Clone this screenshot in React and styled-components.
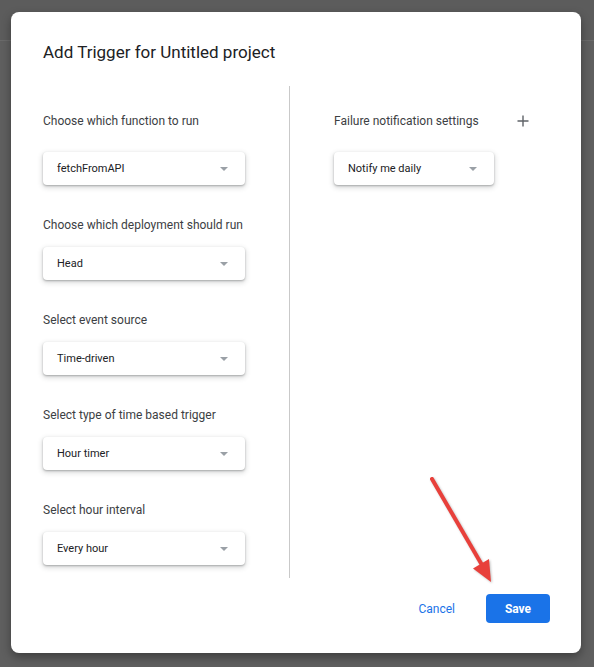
import React from 'react';
import styled, { createGlobalStyle } from 'styled-components';

const GlobalStyle = createGlobalStyle`
  html, body {
    margin: 0;
    padding: 0;
  }

  body {
    width: 594px;
    min-height: 667px;
    background: linear-gradient(
      to bottom,
      #5c5c5c 0,
      #5c5c5c 40px,
      #6a6a6a 40px,
      #6a6a6a 41px,
      #5f5f5f 41px
    );
    font-family: Roboto, "Liberation Sans", sans-serif;
  }
`

const Backdrop = styled.div`
  padding: 12px 13px 14px 11px;
`

const Dialog = styled.div`
  position: relative;
  background: #fff;
  border-radius: 8px;
  box-shadow: 0 4px 10px rgba(0, 0, 0, 0.35);
  padding: 28px 31px 30px 32px;
`

const Title = styled.h2`
  margin: 0;
  font-family: Roboto, "Liberation Sans", sans-serif;
  font-weight: 400;
  font-size: 17px;
  line-height: 24px;
  color: #202124;
`

const Columns = styled.div`
  display: grid;
  grid-template-columns: 247px 1fr;
  margin-top: 22px;
`

const Column = styled.div`
  display: flex;
  flex-direction: column;
  padding: 25px 0 13px ${props => props.$inset || 0}px;
  border-right: ${props => (props.$divider ? '1px solid #c9c9c9' : 'none')};
`

const Field = styled.div`
  display: flex;
  flex-direction: column;
  & + & {
    margin-top: 30px;
  }
`

const LabelRow = styled.div`
  display: flex;
  align-items: center;
  justify-content: space-between;
  width: ${props => (props.$width ? `${props.$width}px` : 'auto')};
  margin-bottom: ${props => props.$gap || 12}px;
`

const Label = styled.span`
  font-size: 12px;
  line-height: 20px;
  color: #3c4043;
`

const AddButton = styled.button`
  display: flex;
  padding: 0;
  border: none;
  background: none;
  cursor: pointer;
`

const Select = styled.div`
  display: flex;
  align-items: center;
  justify-content: space-between;
  box-sizing: border-box;
  width: ${props => props.$width}px;
  height: 33px;
  padding: 0 17px 0 14px;
  border-radius: 4px;
  background: #fff;
  box-shadow: 0 1px 2px rgba(60, 64, 67, 0.35), 0 2px 5px 1px rgba(60, 64, 67, 0.18);
  font-size: 11px;
  color: #202124;
  cursor: pointer;
`

const Caret = styled.span`
  width: 0;
  height: 0;
  border-left: 4px solid transparent;
  border-right: 4px solid transparent;
  border-top: 4px solid #9aa0a6;
`

const Footer = styled.div`
  display: flex;
  justify-content: flex-end;
  align-items: center;
  gap: 23px;
  margin-top: 16px;
`

const TextButton = styled.button`
  height: 29px;
  padding: 0 8px;
  border: none;
  background: none;
  font-family: Roboto, "Liberation Sans", sans-serif;
  font-size: 12px;
  font-weight: 400;
  color: #1a73e8;
  cursor: pointer;
`

const PrimaryButton = styled.button`
  width: 64px;
  height: 29px;
  border: none;
  border-radius: 4px;
  background: #1a73e8;
  font-family: Roboto, "Liberation Sans", sans-serif;
  font-size: 12px;
  font-weight: 700;
  color: #fff;
  cursor: pointer;
`

const Pointer = styled.svg`
  position: absolute;
  left: 409px;
  top: 458px;
  filter: drop-shadow(1px 1px 1px rgba(0, 0, 0, 0.25));
`

const fields = [
  { label: 'Choose which function to run', value: 'fetchFromAPI' },
  { label: 'Choose which deployment should run', value: 'Head' },
  { label: 'Select event source', value: 'Time-driven' },
  { label: 'Select type of time based trigger', value: 'Hour timer' },
  { label: 'Select hour interval', value: 'Every hour' },
]

function Dropdown({ value, width }) {
  return (
    <Select $width={width}>
      <span>{value}</span>
      <Caret />
    </Select>
  )
}

function PlusIcon() {
  return (
    <svg width="12" height="12" viewBox="0 0 12 12">
      <path d="M6 0.5v11M0.5 6h11" stroke="#5f6368" strokeWidth="1.4" fill="none" />
    </svg>
  )
}

export default function App() {
  return (
    <>
      <GlobalStyle />
      <Backdrop>
        <Dialog>
          <Title>Add Trigger for Untitled project</Title>

          <Columns>
            <Column $divider>
              {fields.map((f, i) => (
                <Field key={f.label}>
                  <LabelRow $gap={i === 0 ? 21 : 12}>
                    <Label>{f.label}</Label>
                  </LabelRow>
                  <Dropdown value={f.value} width={202} />
                </Field>
              ))}
            </Column>

            <Column $inset={44}>
              <Field>
                <LabelRow $gap={21} $width={195}>
                  <Label>Failure notification settings</Label>
                  <AddButton aria-label="Add">
                    <PlusIcon />
                  </AddButton>
                </LabelRow>
                <Dropdown value="Notify me daily" width={160} />
              </Field>
            </Column>
          </Columns>

          <Footer>
            <TextButton>Cancel</TextButton>
            <PrimaryButton>Save</PrimaryButton>
          </Footer>

          <Pointer width="90" height="120" viewBox="0 0 90 120">
            <line x1="12" y1="9" x2="62" y2="95" stroke="#e8403b" strokeWidth="4" strokeLinecap="round" />
            <polygon points="71,112 53,98.5 69,89" fill="#e8403b" />
          </Pointer>
        </Dialog>
      </Backdrop>
    </>
  )
}
